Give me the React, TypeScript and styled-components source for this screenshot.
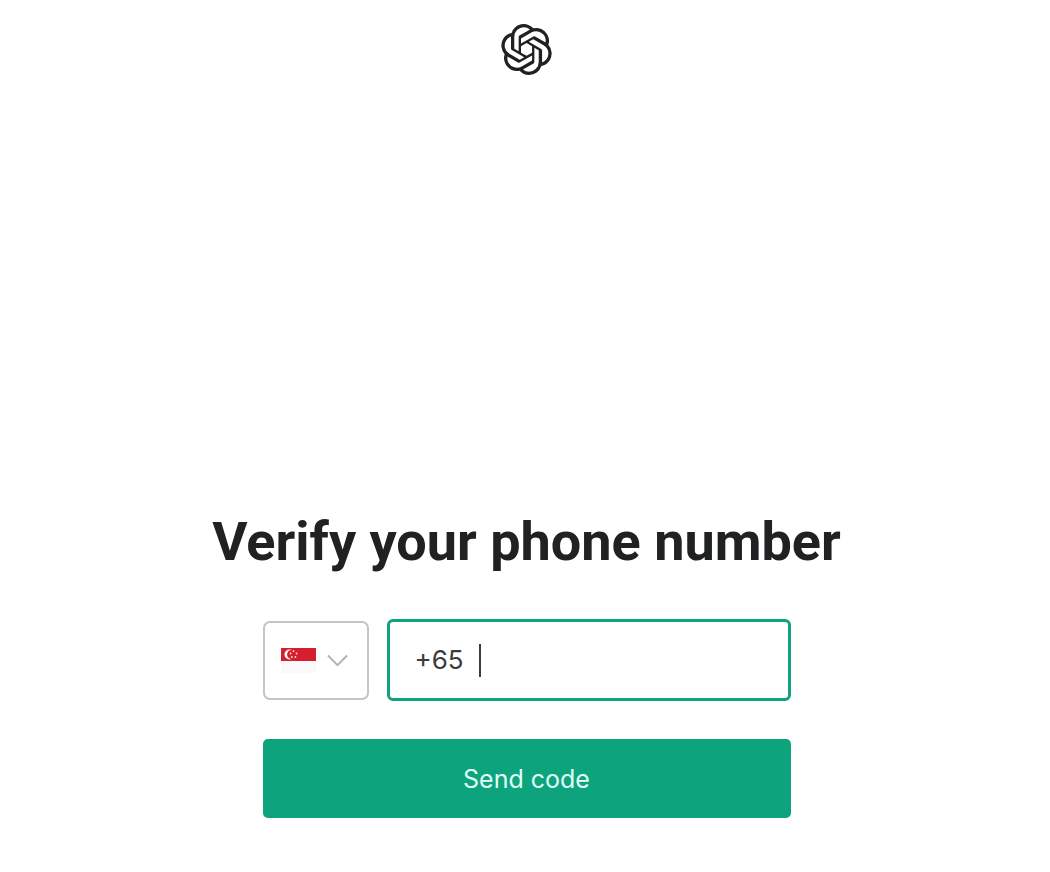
import React, { useState } from "react";
import styled, { createGlobalStyle } from "styled-components";
import { SiOpenai } from "react-icons/si";

const GlobalStyle = createGlobalStyle`
  *, *::before, *::after { box-sizing: border-box; }
  body {
    margin: 0;
    background: #fff;
    color: #202123;
    font-family: Inter, "Liberation Sans", sans-serif;
  }
`;

const Page = styled.div`
  display: flex;
  flex-direction: column;
  align-items: center;
  min-height: 100vh;
  padding: 24px 0 54px 3px;
`;

const Logo = styled(SiOpenai)`
  width: 51px;
  height: 51px;
`;

const Main = styled.main`
  display: flex;
  flex-direction: column;
  align-items: center;
  width: 100%;
  margin-top: auto;
`;

const Title = styled.h1`
  margin: 0 0 45px;
  font-family: Roboto, sans-serif;
  font-size: 54px;
  font-weight: 700;
  line-height: 64px;
  text-align: center;
`;

const Form = styled.form`
  display: flex;
  flex-direction: column;
  gap: 38px;
  width: 100%;
  max-width: 528px;
`;

const PhoneRow = styled.div`
  display: flex;
  align-items: center;
  gap: 18px;
`;

const CountryPicker = styled.div`
  display: grid;
  width: 106px;
  height: 79px;
  border: 2px solid #c5c5c8;
  border-radius: 7px;
`;

const CountryFace = styled.div`
  display: flex;
  grid-area: 1 / 1;
  align-items: center;
  gap: 11px;
  padding-left: 16px;
`;

const CountrySelect = styled.select`
  grid-area: 1 / 1;
  width: 100%;
  height: 100%;
  opacity: 0;
  cursor: pointer;
`;

const PhoneField = styled.label`
  display: flex;
  flex: 1;
  align-items: center;
  min-width: 0;
  height: 82px;
  padding-left: 25px;
  border: 3px solid #10a37f;
  border-radius: 6px;
`;

const PhoneInput = styled.input`
  width: 64px;
  padding: 0;
  border: 0;
  outline: 0;
  background: transparent;
  color: #3c3c3e;
  caret-color: transparent;
  font-family: Inter, sans-serif;
  font-size: 26px;
  line-height: 32px;
`;

const Caret = styled.span`
  width: 2px;
  height: 33px;
  background: #3c3c3e;
`;

const SubmitButton = styled.button`
  height: 79px;
  border: 0;
  border-radius: 5px;
  background: #0da37c;
  color: #e0fff6;
  font-family: Inter, sans-serif;
  font-size: 25px;
  line-height: 32px;
  cursor: pointer;
`;

function SingaporeFlag() {
  return (
    <svg width="35" height="26" viewBox="0 0 35 26" aria-hidden="true">
      <rect y="1" width="35" height="25" fill="#fafafa" />
      <rect y="1" width="35" height="13" fill="#d51f2e" />
      <circle cx="8.5" cy="7.5" r="5" fill="#fff" />
      <circle cx="10.7" cy="7.5" r="4.6" fill="#d51f2e" />
      <g fill="#fff" opacity="0.85">
        <circle cx="12.5" cy="4.2" r="0.9" />
        <circle cx="9.6" cy="6.5" r="0.9" />
        <circle cx="15.6" cy="6.5" r="0.9" />
        <circle cx="10.8" cy="10" r="0.9" />
        <circle cx="14.4" cy="10" r="0.9" />
      </g>
    </svg>
  );
}

function Chevron() {
  return (
    <svg width="21" height="13" viewBox="0 0 21 13" fill="none" stroke="#b0b0b3" strokeWidth="1.8" aria-hidden="true">
      <path d="M1 1.5 10.5 11.2 20 1.5" />
    </svg>
  );
}

export default function App() {
  const [phone, setPhone] = useState("+65");
  return (
    <>
      <GlobalStyle />
      <Page>
        <header>
          <Logo aria-label="OpenAI" />
        </header>
        <Main>
          <Title>Verify your phone number</Title>
          <Form onSubmit={(event) => event.preventDefault()}>
            <PhoneRow>
              <CountryPicker>
                <CountryFace>
                  <SingaporeFlag />
                  <Chevron />
                </CountryFace>
                <CountrySelect aria-label="Country" defaultValue="SG">
                  <option value="SG">Singapore</option>
                </CountrySelect>
              </CountryPicker>
              <PhoneField>
                <PhoneInput
                  type="tel"
                  aria-label="Phone number"
                  value={phone}
                  onChange={(event) => setPhone(event.target.value)}
                />
                <Caret />
              </PhoneField>
            </PhoneRow>
            <SubmitButton type="submit">Send code</SubmitButton>
          </Form>
        </Main>
      </Page>
    </>
  );
}
